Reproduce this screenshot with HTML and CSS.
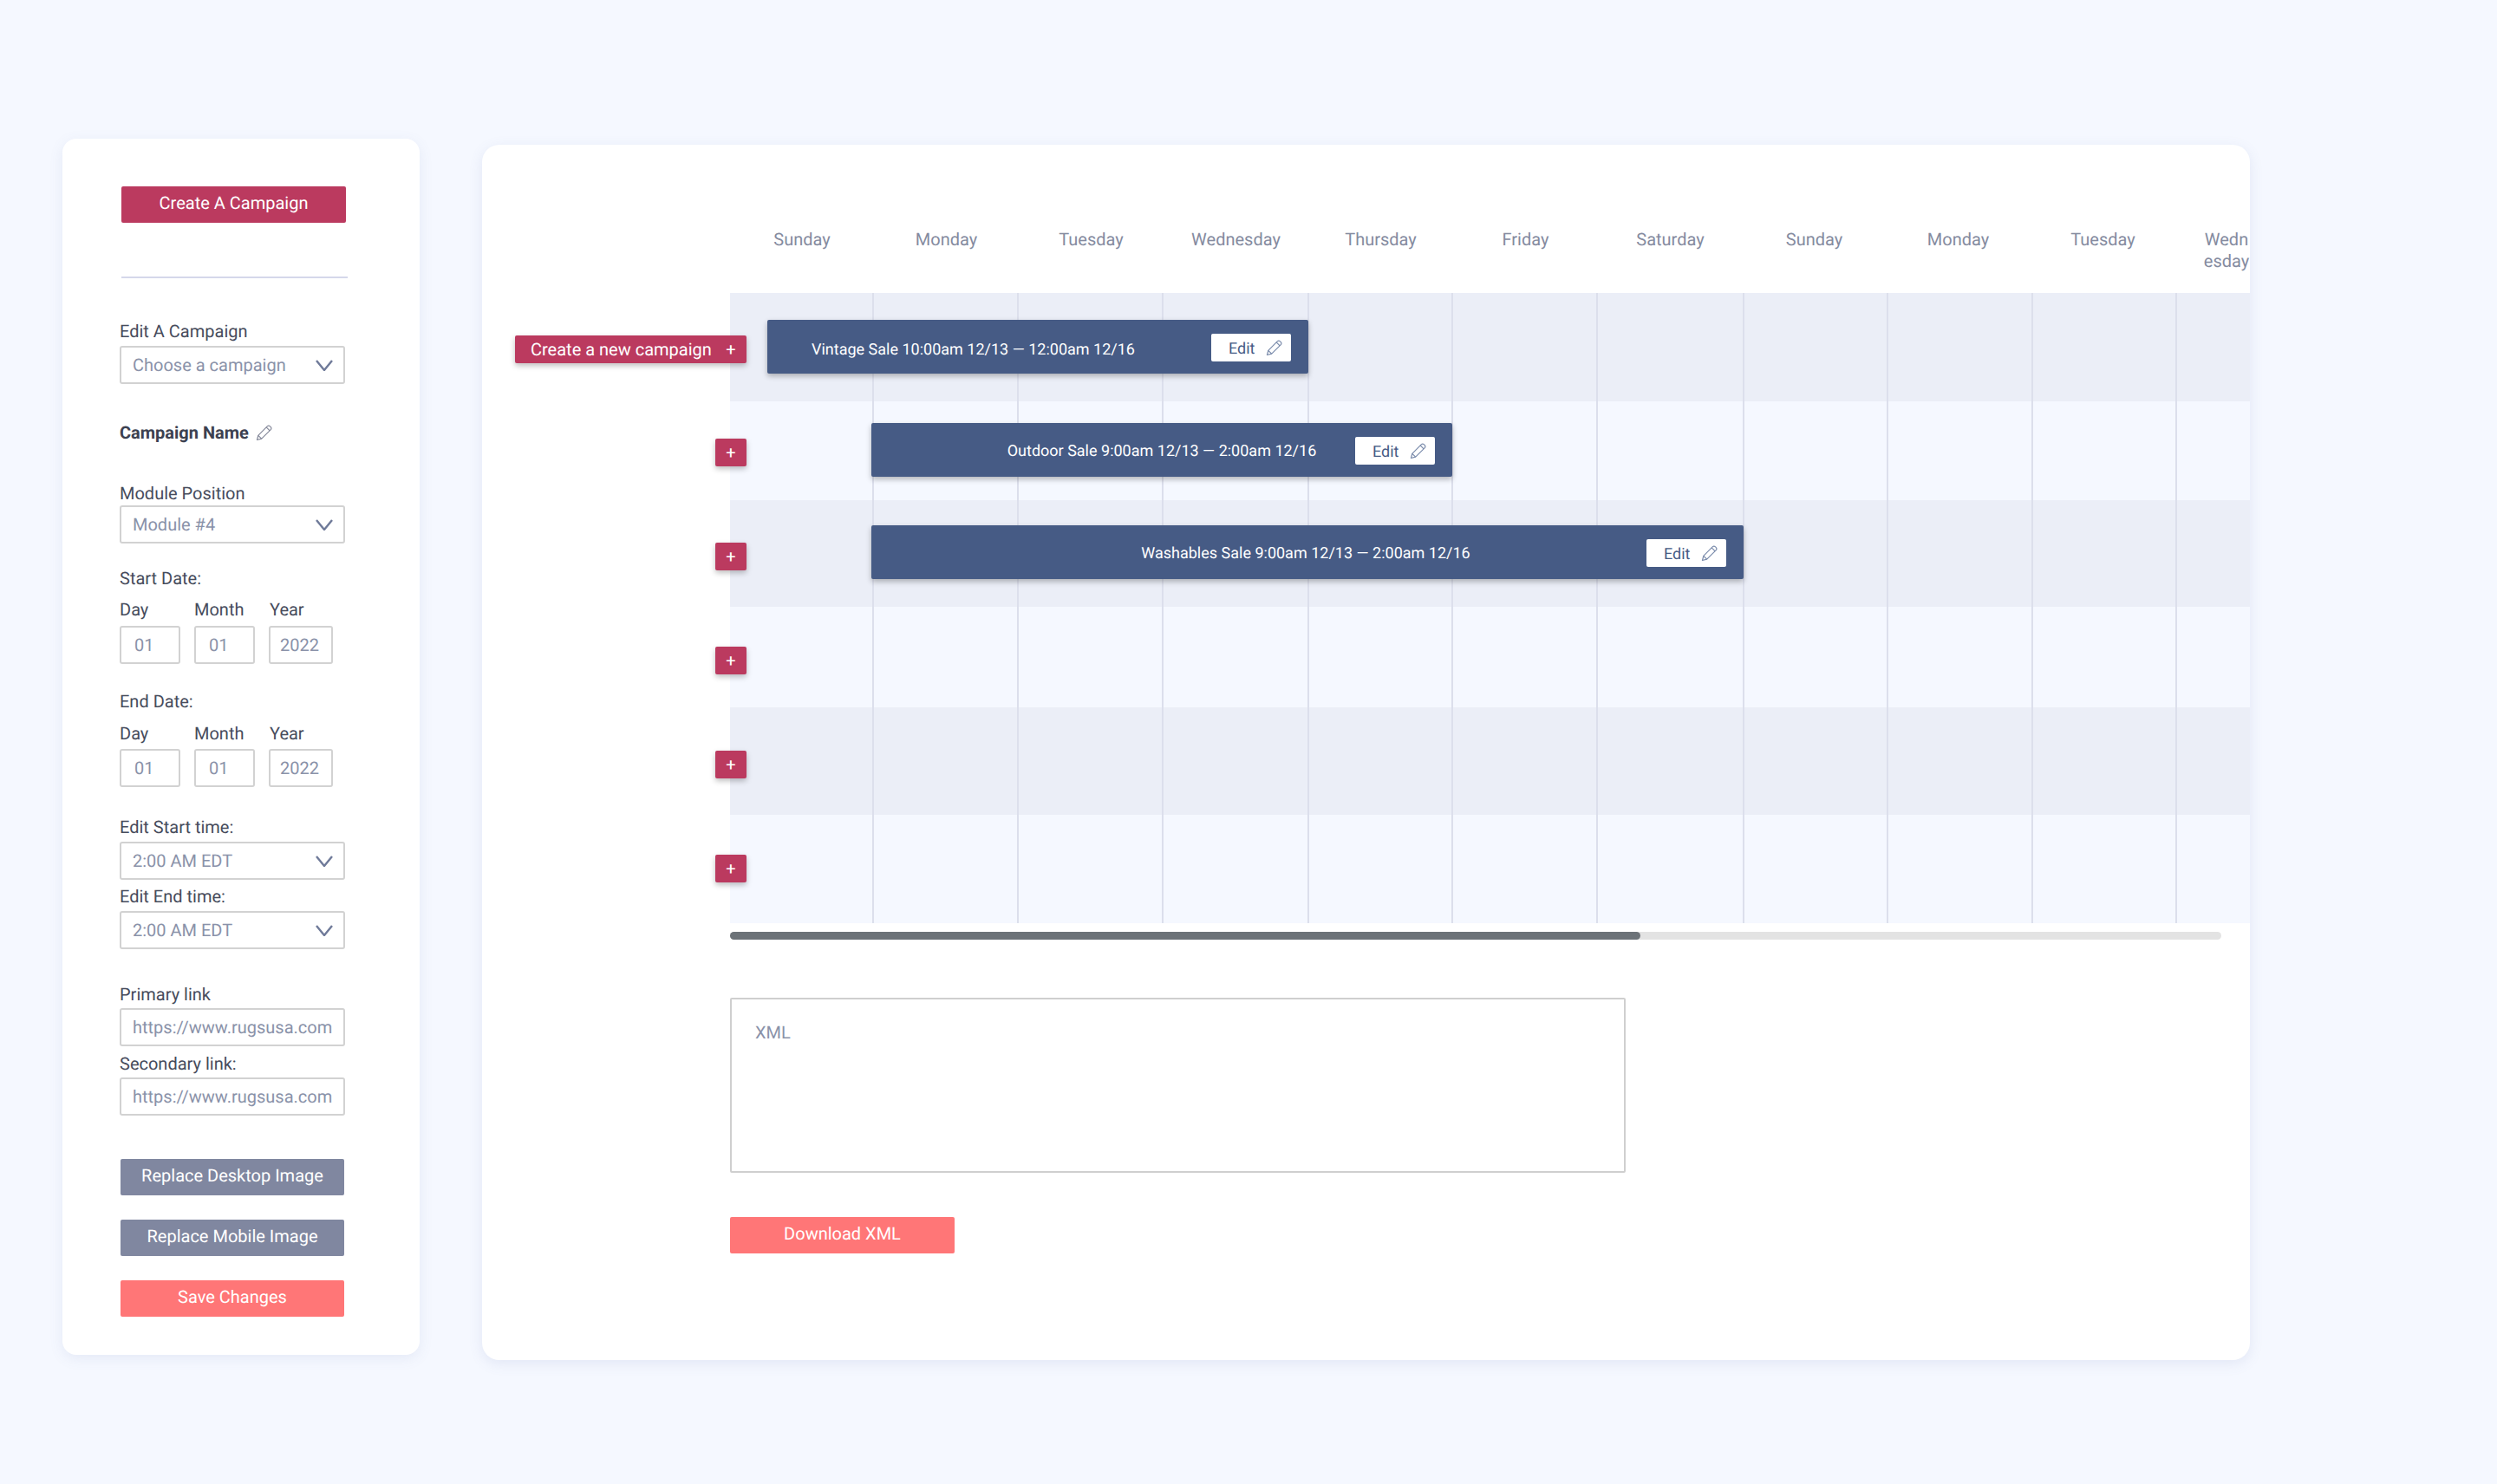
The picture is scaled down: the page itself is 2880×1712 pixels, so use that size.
FILE: index.html
```html
<!DOCTYPE html>
<html lang="en">
<head>
    <meta charset="UTF-8">
    <meta name="viewport" content="width=device-width, initial-scale=1.0">
    <title>Campaign Scheduler</title>
    <link rel="stylesheet" href="styles.css">
</head>
<body>

    <svg class="icon-defs" aria-hidden="true">
        <symbol id="pencil" viewBox="0 0 20 20">
            <path d="M1.5 18.5l1.3-5.2L13.4 2.7a2 2 0 0 1 2.9 0l1 1a2 2 0 0 1 0 2.9L6.7 17.2z" fill="none" stroke="currentColor" stroke-width="1.2" stroke-linejoin="round"/>
            <path d="M12.2 3.9l3.9 3.9M2.8 13.3l3.9 3.9" fill="none" stroke="currentColor" stroke-width="1.2"/>
        </symbol>
        <symbol id="chevron" viewBox="0 0 20 13">
            <path d="M1 1l9 11 9-11" fill="none" stroke="currentColor" stroke-width="2.4"/>
        </symbol>
    </svg>

    <!-- Sidebar -->
    <aside class="sidebar">
        <div class="btn btn-crimson btn-create">Create A Campaign</div>
        <hr class="divider">

        <div class="label label-edit">Edit A Campaign</div>
        <div class="box box-select">Choose a campaign <svg class="chevron"><use href="#chevron"/></svg></div>

        <div class="label campaign-name">Campaign Name <svg class="pencil"><use href="#pencil"/></svg></div>

        <div class="label label-module">Module Position</div>
        <div class="box box-select">Module #4 <svg class="chevron"><use href="#chevron"/></svg></div>

        <div class="label label-start">Start Date:</div>
        <div class="date-row">
            <div class="label date-label">Day</div>
            <div class="label date-label">Month</div>
            <div class="label date-label date-label-year">Year</div>
            <div class="box box-date">01</div>
            <div class="box box-date">01</div>
            <div class="box box-date box-year">2022</div>
        </div>

        <div class="label label-end">End Date:</div>
        <div class="date-row date-row-end">
            <div class="label date-label">Day</div>
            <div class="label date-label">Month</div>
            <div class="label date-label date-label-year">Year</div>
            <div class="box box-date">01</div>
            <div class="box box-date">01</div>
            <div class="box box-date box-year">2022</div>
        </div>

        <div class="label label-time">Edit Start time:</div>
        <div class="box box-select">2:00 AM EDT <svg class="chevron"><use href="#chevron"/></svg></div>

        <div class="label label-time-end">Edit End time:</div>
        <div class="box box-select">2:00 AM EDT <svg class="chevron"><use href="#chevron"/></svg></div>

        <div class="label label-link">Primary link</div>
        <div class="box">https://www.rugsusa.com</div>

        <div class="label label-link-second">Secondary link:</div>
        <div class="box">https://www.rugsusa.com</div>

        <div class="btn btn-slate btn-side btn-desktop">Replace Desktop Image</div>
        <div class="btn btn-slate btn-side">Replace Mobile Image</div>
        <div class="btn btn-coral btn-side">Save Changes</div>
    </aside>

    <!-- Calendar -->
    <main class="panel">
        <div class="days">
            <div>Sunday</div>
            <div>Monday</div>
            <div>Tuesday</div>
            <div>Wednesday</div>
            <div>Thursday</div>
            <div>Friday</div>
            <div>Saturday</div>
            <div>Sunday</div>
            <div>Monday</div>
            <div>Tuesday</div>
            <div class="day-cut">Wedn<br>esday</div>
        </div>

        <div class="board">
            <div class="add-col">
                <div class="add add-wide">Create a new campaign <span class="plus">+</span></div>
                <div class="add"><span class="plus">+</span></div>
                <div class="add"><span class="plus">+</span></div>
                <div class="add"><span class="plus">+</span></div>
                <div class="add"><span class="plus">+</span></div>
                <div class="add"><span class="plus">+</span></div>
            </div>

            <div class="grid">
                <div class="row row-1"></div>
                <div class="row row-2"></div>
                <div class="row row-3"></div>
                <div class="row row-4"></div>
                <div class="row row-5"></div>
                <div class="row row-6"></div>

                <div class="lines">
                    <div></div><div></div><div></div><div></div><div></div>
                    <div></div><div></div><div></div><div></div><div></div>
                </div>

                <div class="bars">
                    <div class="bar bar-vintage">
                        <span class="bar-text">Vintage Sale 10:00am 12/13 — 12:00am 12/16</span>
                        <div class="edit">Edit <svg class="pencil pencil-edit"><use href="#pencil"/></svg></div>
                    </div>
                    <div class="bar bar-outdoor">
                        <span class="bar-text">Outdoor Sale 9:00am 12/13 — 2:00am 12/16</span>
                        <div class="edit">Edit <svg class="pencil pencil-edit"><use href="#pencil"/></svg></div>
                    </div>
                    <div class="bar bar-washables">
                        <span class="bar-text">Washables Sale 9:00am 12/13 — 2:00am 12/16</span>
                        <div class="edit">Edit <svg class="pencil pencil-edit"><use href="#pencil"/></svg></div>
                    </div>
                </div>
            </div>
        </div>

        <div class="scroll-track"><div class="scroll-thumb"></div></div>

        <div class="xml-box">XML</div>
        <div class="btn btn-coral btn-download">Download XML</div>
    </main>

</body>
</html>
```

FILE: styles.css
```css
* {
    margin: 0;
    padding: 0;
    box-sizing: border-box;
}

:root {
    --cols: 166px 167px 167px 168px 166px 167px 169px 166px 167px 166px 84px;
}

body {
    font-family: Roboto, "Liberation Sans", sans-serif;
    font-size: 20px;
    line-height: 24px;
    text-rendering: geometricPrecision;
    background-color: #f5f8ff;
    color: #474c5c;
    display: flex;
    align-items: flex-start;
    width: 2880px;
    height: 1712px;
    overflow: hidden;
}

.icon-defs {
    display: none;
}

/* Sidebar */
.sidebar {
    width: 412px;
    height: 1403px;
    margin: 160px 0 0 72px;
    padding-left: 66px;
    background-color: white;
    border-radius: 16px;
    box-shadow: 0 4px 16px rgba(90, 110, 170, 0.1);
}

.btn {
    display: flex;
    align-items: center;
    justify-content: center;
    height: 42px;
    padding-bottom: 4px;
    color: white;
    border-radius: 2px;
}

.btn-crimson {
    background-color: #bb3a5f;
}

.btn-slate {
    background-color: #8087a0;
}

.btn-coral {
    background-color: #ff7677;
}

.btn-create {
    width: 259px;
    margin: 55px 0 0 2px;
}

.divider {
    width: 261px;
    height: 2px;
    margin: 62px 0 0 2px;
    border: none;
    background-color: #d5d8ea;
}

.label-edit {
    margin-top: 49px;
    margin-bottom: 5px;
}

.campaign-name {
    display: flex;
    align-items: center;
    gap: 8px;
    margin-top: 44px;
    font-weight: bold;
    color: #3c4150;
}

.label-module {
    margin-top: 46px;
    margin-bottom: 2px;
}

.label-start {
    margin-top: 28px;
}

.label-end {
    margin-top: 31px;
}

.label-time {
    margin-top: 34px;
    margin-bottom: 5px;
}

.label-time-end {
    margin-top: 7px;
    margin-bottom: 5px;
}

.label-link {
    margin-top: 40px;
    margin-bottom: 4px;
}

.label-link-second {
    margin-top: 8px;
    margin-bottom: 4px;
}

.box {
    display: flex;
    align-items: center;
    justify-content: space-between;
    width: 260px;
    height: 44px;
    padding: 0 12px 0 13px;
    background-color: white;
    border: 2px solid #d2d2d2;
    border-radius: 3px;
    color: #8a92a9;
    white-space: nowrap;
}

.chevron {
    width: 20px;
    height: 13px;
    color: #6f7a99;
}

.pencil {
    width: 20px;
    height: 20px;
    color: #85899a;
}

.pencil-edit {
    color: #7a8bab;
}

.date-row {
    display: grid;
    grid-template-columns: 70px 70px 74px;
    column-gap: 16px;
    margin-top: 12px;
}

.date-row-end {
    margin-top: 13px;
}

.date-label {
    margin-bottom: 7px;
}

.date-label-year {
    padding-left: 1px;
}

.date-row-end .date-label {
    margin-bottom: 6px;
}

.box-date {
    width: 100%;
    padding-left: 15px;
}

.box-year {
    padding-left: 11px;
}

.btn-side {
    width: 258px;
    margin: 28px 0 0 1px;
}

.btn-desktop {
    margin-top: 50px;
}

/* Calendar panel */
.panel {
    width: 2039px;
    height: 1402px;
    margin: 167px 0 0 72px;
    background-color: white;
    border-radius: 20px;
    box-shadow: 0 4px 16px rgba(90, 110, 170, 0.12);
    overflow: hidden;
}

.days {
    display: grid;
    grid-template-columns: 166px 167px 167px 167px 167px 167px 167px 165px 167px 167px 86px;
    height: 171px;
    margin-left: 286px;
    padding-top: 97px;
    line-height: 25px;
    color: #858b9f;
    text-align: center;
}

.day-cut {
    padding-left: 32px;
}

.board {
    display: flex;
}

.add-col {
    position: relative;
    z-index: 2;
    display: flex;
    flex-direction: column;
    align-items: flex-end;
    gap: 88px;
    width: 267px;
    margin: 0 -19px 0 38px;
    padding-top: 49px;
}

.add {
    display: flex;
    align-items: center;
    justify-content: flex-end;
    height: 32px;
    min-width: 36px;
    background-color: #bb3a5f;
    color: white;
    border-radius: 2px;
    box-shadow: 0 3px 6px rgba(0, 0, 0, 0.25);
}

.add-wide {
    width: 267px;
    justify-content: space-between;
    margin-bottom: -1px;
    padding-left: 18px;
}

.plus {
    width: 36px;
    font-size: 20px;
    text-align: center;
}

/* Rows, day lines, bars */
.grid {
    position: relative;
    width: 1753px;
}

.row-1, .row-3, .row-5 {
    background-color: #ebeef7;
}

.row-2, .row-4, .row-6 {
    background-color: #f5f8ff;
}

.row-1 { height: 125px; }
.row-2 { height: 114px; }
.row-3 { height: 123px; }
.row-4 { height: 116px; }
.row-5 { height: 124px; }
.row-6 { height: 125px; }

.lines {
    position: absolute;
    inset: 0;
    display: grid;
    grid-template-columns: var(--cols);
}

.lines div {
    border-right: 2px solid #dcdfec;
}

.bars {
    position: absolute;
    inset: 0;
    display: flex;
    flex-direction: column;
    gap: 56px;
    padding-top: 31px;
}

.bar {
    display: grid;
    grid-template-columns: 92px 1fr 92px;
    align-items: center;
    height: 62px;
    padding: 0 20px;
    background-color: #465b85;
    color: white;
    font-size: 18px;
    border-radius: 2px;
    box-shadow: 0 3px 6px rgba(0, 0, 0, 0.28);
}

.bar-text {
    grid-column: 2;
    padding-top: 4px;
    text-align: center;
    white-space: nowrap;
}

.bar-vintage {
    grid-template-columns: 1fr 92px;
    width: 624px;
    margin-left: 43px;
    padding-left: 51px;
}

.bar-vintage .bar-text {
    grid-column: 1;
    padding-top: 8px;
    text-align: left;
}

.bar-outdoor {
    width: 670px;
    margin: 1px 0 0 163px;
}

.bar-washables {
    width: 1006px;
    margin-left: 163px;
}

.bar-washables .bar-text {
    padding: 4px 4px 0 0;
}

.edit {
    display: flex;
    align-items: center;
    justify-content: space-between;
    height: 32px;
    margin-top: 2px;
    padding: 4px 9px 0 20px;
    background-color: white;
    color: #465b85;
    border-radius: 2px;
}

.edit .pencil {
    margin-top: -4px;
}

/* Below the calendar */
.scroll-track {
    width: 1720px;
    height: 9px;
    margin: 10px 0 0 286px;
    background-color: #e3e3e3;
    border-radius: 5px;
}

.scroll-thumb {
    width: 1050px;
    height: 9px;
    background-color: #6c7278;
    border-radius: 5px;
}

.xml-box {
    width: 1033px;
    height: 202px;
    margin: 67px 0 0 286px;
    padding: 26px 27px;
    border: 2px solid #cfcfcf;
    border-radius: 2px;
    color: #8a92a9;
}

.btn-download {
    width: 259px;
    margin: 51px 0 0 286px;
}
```
